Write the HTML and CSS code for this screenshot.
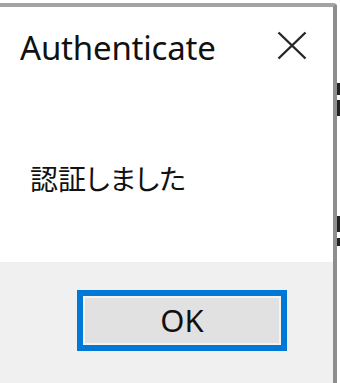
FILE: index.html
```html
<!DOCTYPE html>
<html lang="ja">
<head>
<meta charset="utf-8">
<title>Authenticate</title>
<link rel="stylesheet" href="styles.css">
</head>
<body>
<div class="screen">
  <div class="dialog">
    <div class="titlebar">
      <span class="title">Authenticate</span>
      <span class="close" aria-label="Close">
        <svg width="30" height="29" viewBox="0 0 30 29"><path d="M1.5 1.5 L28.5 27.5 M28.5 1.5 L1.5 27.5" stroke="#262626" stroke-width="2.4" fill="none"/></svg>
      </span>
    </div>
    <div class="content">
      <p class="message">認証しました</p>
    </div>
    <div class="footer">
      <button class="ok">OK</button>
    </div>
  </div>
  <div class="behind">
    <span class="frag frag-a"></span>
    <span class="frag frag-b"></span>
    <span class="frag frag-c"></span>
    <span class="frag frag-d"></span>
  </div>
</div>
</body>
</html>
```

FILE: styles.css
```css
html, body {
  margin: 0;
  padding: 0;
  background: #ffffff;
}
body {
  font-family: "Noto Sans", "Open Sans", "Noto Sans CJK JP", sans-serif;
  color: #111;
  overflow: hidden;
}
.screen {
  display: flex;
  height: 383px;
  padding-top: 3px;
  box-sizing: border-box;
  width: 340px;
}
.dialog {
  width: 337px;
  box-sizing: border-box;
  border-top: 4px solid #a3a3a3;
  border-right: 4px solid #8e8e8e;
  border-top-right-radius: 4px;
  display: flex;
  flex-direction: column;
  background: #fff;
  flex-shrink: 0;
}
.titlebar {
  height: 80px;
  display: flex;
  align-items: center;
  justify-content: space-between;
  padding-left: 20px;
  padding-right: 26px;
}
.title {
  font-size: 33px;
  letter-spacing: -0.2px;
}
.close {
  display: flex;
  margin-top: -3px;
}
.content {
  height: 175px;
  box-sizing: border-box;
  padding-top: 76px;
  padding-left: 30px;
}
.message {
  margin: 0;
  font-family: "Noto Sans CJK JP", sans-serif;
  font-size: 28px;
  line-height: 30px;
  font-feature-settings: "palt";
}
.footer {
  flex: 1;
  background: #f0f0f0;
  padding-top: 28px;
  padding-left: 77px;
}
.ok {
  width: 210px;
  height: 61px;
  box-sizing: border-box;
  border: 6px solid #0078d7;
  background: #e1e1e1;
  box-shadow: inset 0 0 0 2px #f6f1ea;
  font-family: "Noto Sans", "Open Sans", sans-serif;
  font-size: 31px;
  color: #111;
  padding: 0;
  margin: 0;
  line-height: 1;
}
.behind {
  flex: 1;
  display: flex;
  flex-direction: column;
  background: #fff;
}
.frag {
  display: block;
  background: #222;
  width: 3px;
}
.frag-a { margin-top: 80px; height: 12px; }
.frag-b { margin-top: 5px; height: 16px; }
.frag-c { margin-top: 100px; height: 16px; }
.frag-d { margin-top: 6px; height: 8px; }
```
